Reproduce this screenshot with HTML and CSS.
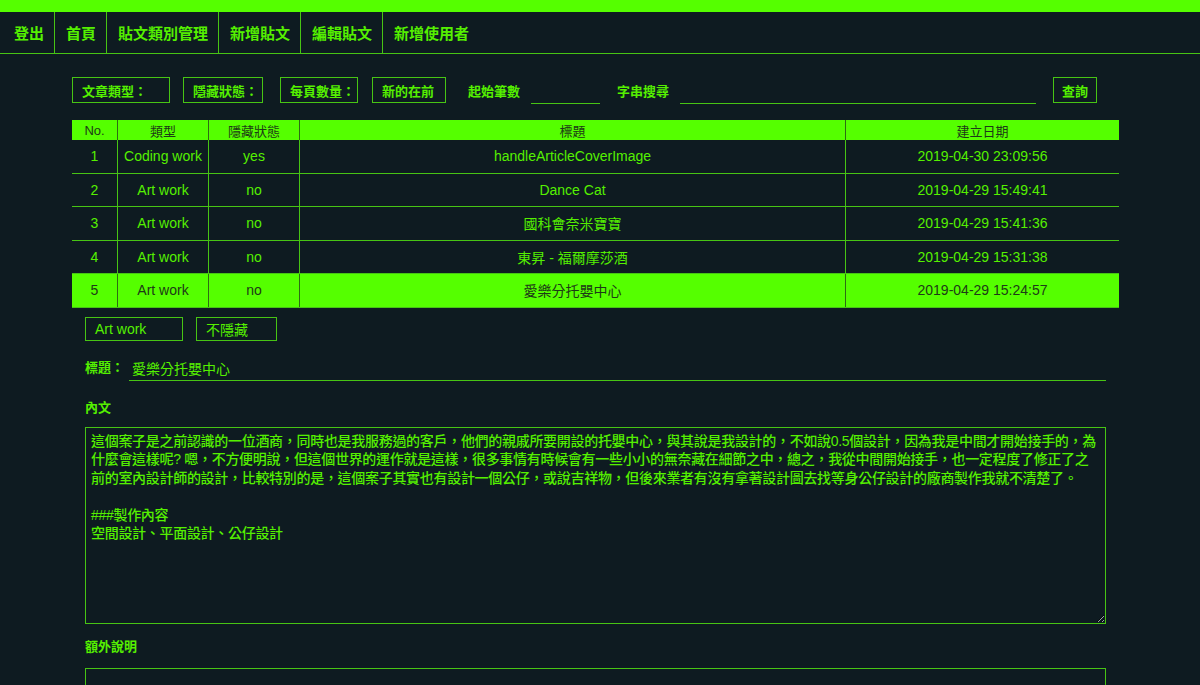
FILE: index.html
```html
<!DOCTYPE html>
<html lang="zh-Hant">
<head>
    <meta charset="UTF-8">
    <meta name="viewport" content="width=device-width, initial-scale=1.0">
    <title>後台 - 編輯貼文</title>
    <link rel="stylesheet" href="styles.css">
</head>
<body>
    <div class="topbar"></div>
    <nav class="nav">
        <a href="#">登出</a>
        <a href="#">首頁</a>
        <a href="#">貼文類別管理</a>
        <a href="#">新增貼文</a>
        <a href="#">編輯貼文</a>
        <a href="#">新增使用者</a>
    </nav>

    <div class="page">
        <div class="filters">
            <div class="select type-select">文章類型：</div>
            <div class="select hide-select">隱藏狀態：</div>
            <div class="select size-select">每頁數量：</div>
            <div class="select order-select">新的在前</div>
            <label class="field start-field">起始筆數<input class="line-input start-input" type="text"></label>
            <label class="field search-field">字串搜尋<input class="line-input search-input" type="text"></label>
            <button class="btn">查詢</button>
        </div>

        <table class="list">
            <thead>
                <tr>
                    <th class="col-no">No.</th>
                    <th class="col-type">類型</th>
                    <th class="col-hide">隱藏狀態</th>
                    <th class="col-title">標題</th>
                    <th class="col-date">建立日期</th>
                </tr>
            </thead>
            <tbody>
                <tr>
                    <td>1</td>
                    <td>Coding work</td>
                    <td>yes</td>
                    <td>handleArticleCoverImage</td>
                    <td>2019-04-30 23:09:56</td>
                </tr>
                <tr>
                    <td>2</td>
                    <td>Art work</td>
                    <td>no</td>
                    <td>Dance Cat</td>
                    <td>2019-04-29 15:49:41</td>
                </tr>
                <tr>
                    <td>3</td>
                    <td>Art work</td>
                    <td>no</td>
                    <td>國科會奈米寶寶</td>
                    <td>2019-04-29 15:41:36</td>
                </tr>
                <tr>
                    <td>4</td>
                    <td>Art work</td>
                    <td>no</td>
                    <td>東昇 - 福爾摩莎酒</td>
                    <td>2019-04-29 15:31:38</td>
                </tr>
                <tr class="selected">
                    <td>5</td>
                    <td>Art work</td>
                    <td>no</td>
                    <td>愛樂分托嬰中心</td>
                    <td>2019-04-29 15:24:57</td>
                </tr>
            </tbody>
        </table>

        <div class="editor">
            <div class="selects">
                <div class="select cat-select">Art work</div>
                <div class="select vis-select">不隱藏</div>
            </div>

            <div class="title-row">
                <span class="label">標題：</span>
                <input class="line-input title-input" type="text" value="愛樂分托嬰中心">
            </div>

            <div class="label block-label">內文</div>
            <textarea class="content">這個案子是之前認識的一位酒商，同時也是我服務過的客戶，他們的親戚所要開設的托嬰中心，與其說是我設計的，不如說0.5個設計，因為我是中間才開始接手的，為什麼會這樣呢? 嗯，不方便明說，但這個世界的運作就是這樣，很多事情有時候會有一些小小的無奈藏在細節之中，總之，我從中間開始接手，也一定程度了修正了之前的室內設計師的設計，比較特別的是，這個案子其實也有設計一個公仔，或說吉祥物，但後來業者有沒有拿著設計圖去找等身公仔設計的廠商製作我就不清楚了。

###製作內容
空間設計、平面設計、公仔設計</textarea>

            <div class="label block-label extra-label">額外說明</div>
            <textarea class="content extra"></textarea>
        </div>
    </div>
</body>
</html>
```

FILE: styles.css
```css
body {
    margin: 0;
    background-color: #0e1b21;
    color: #55f000;
    font-family: "Liberation Sans", "Noto Sans CJK TC", sans-serif;
    font-size: 13px;
}
.topbar {
    height: 12px;
    background-color: #55ff00;
}
.nav {
    display: flex;
    height: 41px;
    padding-left: 3px;
    border-bottom: 1px solid #47c414;
}
.nav a {
    display: flex;
    align-items: center;
    padding: 0 10px 0 11px;
    border-right: 1px solid #47c414;
    color: #55f000;
    font-size: 15px;
    font-weight: bold;
    text-decoration: none;
}
.nav a:last-child {
    border-right: none;
}
.page {
    width: 1047px;
    margin: 23px 0 0 72px;
}
.filters {
    display: flex;
    align-items: center;
    height: 26px;
}
.select {
    box-sizing: border-box;
    height: 26px;
    padding-left: 9px;
    border: 1px solid #47c414;
    display: flex;
    align-items: center;
    font-weight: bold;
}
.type-select {
    width: 98px;
    margin-right: 13px;
}
.hide-select {
    width: 80px;
    margin-right: 17px;
}
.size-select {
    width: 78px;
    margin-right: 14px;
}
.order-select {
    width: 74px;
    margin-right: 22px;
}
.field {
    display: flex;
    align-items: center;
    gap: 11px;
    font-weight: bold;
}
.line-input {
    box-sizing: border-box;
    height: 24px;
    border: none;
    border-bottom: 1px solid #47c414;
    background: transparent;
    color: #55f000;
    font-family: inherit;
    font-size: 14px;
    outline: none;
    padding: 0 3px;
}
.start-field {
    margin-right: 17px;
}
.start-input {
    width: 69px;
    margin-top: 3px;
}
.search-input {
    width: 356px;
    margin-top: 3px;
}
.btn {
    box-sizing: border-box;
    height: 26px;
    width: 44px;
    margin-left: 17px;
    padding: 0;
    border: 1px solid #47c414;
    background: transparent;
    color: #55f000;
    font-family: inherit;
    font-size: 13px;
    font-weight: bold;
}
.list {
    width: 1047px;
    margin-top: 17px;
    border-collapse: collapse;
    table-layout: fixed;
}
.list th {
    height: 20px;
    padding: 0;
    background-color: #55ff00;
    color: #1d3a17;
    font-size: 13px;
    font-weight: normal;
    border-left: 1px solid #2d6b14;
}
.list th:first-child,
.list td:first-child {
    border-left: none;
}
.col-no { width: 45px; }
.col-type { width: 90px; }
.col-hide { width: 90px; }
.col-date { width: 273px; }
.list td {
    height: 32.5px;
    padding: 0;
    text-align: center;
    font-size: 14px;
    border-left: 1px solid #47c414;
    border-bottom: 1px solid #47c414;
}
.list tr.selected td {
    background-color: #55ff00;
    color: #1d3a17;
    border-left-color: #2d6b14;
}
.editor {
    padding: 0 13px;
}
.selects {
    display: flex;
    gap: 13px;
    margin-top: 9px;
}
.selects .select {
    height: 24px;
    font-size: 14px;
    font-weight: normal;
}
.cat-select {
    width: 98px;
}
.vis-select {
    width: 81px;
}
.title-row {
    display: flex;
    align-items: flex-start;
    margin-top: 15px;
}
.label {
    font-weight: bold;
    color: #55f000;
}
.title-row .label {
    line-height: 24px;
}
.title-input {
    flex: 1;
    height: 25px;
    margin-left: 5px;
}
.block-label {
    margin-top: 17px;
    line-height: 20px;
}
.content {
    display: block;
    box-sizing: border-box;
    width: 100%;
    height: 197px;
    margin-top: 9px;
    padding: 4px 5px;
    border: 1px solid #47c414;
    background: transparent;
    color: #55f000;
    font-family: inherit;
    font-size: 14px;
    font-weight: 500;
    letter-spacing: -0.3px;
    line-height: 18.5px;
    outline: none;
}
.extra-label {
    margin-top: 13px;
}
.extra {
    height: 120px;
    margin-top: 11px;
}
```
